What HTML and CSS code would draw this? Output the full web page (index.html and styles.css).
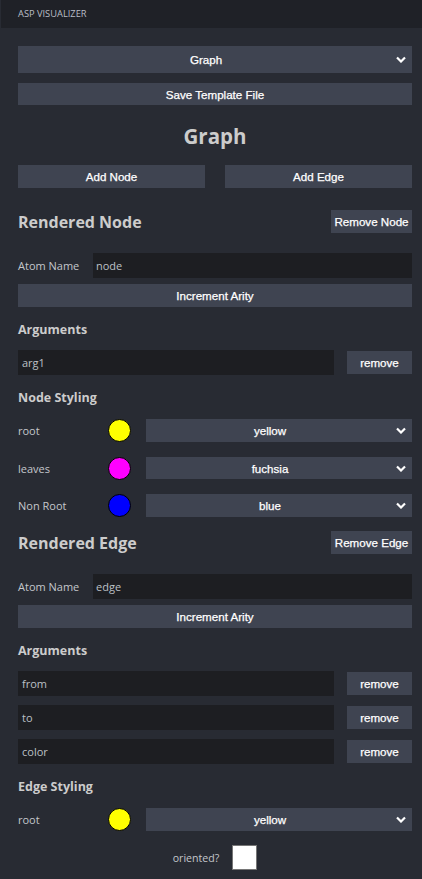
FILE: index.html
```html
<!DOCTYPE html>
<html lang="en">
<head>
<meta charset="utf-8">
<title>ASP Visualizer</title>
<link rel="stylesheet" href="styles.css">
</head>
<body>
<header class="topbar">ASP VISUALIZER</header>
<main class="panel">
  <div class="select select-main">
    <span class="select-text">Graph</span>
    <svg class="chev" width="10" height="7" viewBox="0 0 10 7"><path d="M1 1.5 L5 5.5 L9 1.5" fill="none" stroke="#fff" stroke-width="2.2"/></svg>
  </div>
  <button class="btn btn-full btn-save">Save Template File</button>
  <h1 class="title">Graph</h1>
  <div class="add-row">
    <button class="btn btn-add">Add Node</button>
    <button class="btn btn-add">Add Edge</button>
  </div>

  <section class="block block-node">
    <div class="sec-head">
      <h2 class="sec-title">Rendered Node</h2>
      <button class="btn btn-remove-sec">Remove Node</button>
    </div>
    <div class="atom-row">
      <span class="label atom-label">Atom Name</span>
      <div class="input atom-input">node</div>
    </div>
    <button class="btn btn-full btn-inc">Increment Arity</button>
    <h3 class="sub-title">Arguments</h3>
    <div class="args">
      <div class="arg-row"><div class="input arg-input">arg1</div><button class="btn btn-rm">remove</button></div>
    </div>
    <h3 class="sub-title">Node Styling</h3>
    <div class="styles">
      <div class="style-row">
        <span class="label">root</span>
        <span class="swatch sw-yellow"></span>
        <div class="select select-sm"><span class="select-text">yellow</span><svg class="chev" width="10" height="7" viewBox="0 0 10 7"><path d="M1 1.5 L5 5.5 L9 1.5" fill="none" stroke="#fff" stroke-width="2.2"/></svg></div>
      </div>
      <div class="style-row">
        <span class="label">leaves</span>
        <span class="swatch sw-fuchsia"></span>
        <div class="select select-sm"><span class="select-text">fuchsia</span><svg class="chev" width="10" height="7" viewBox="0 0 10 7"><path d="M1 1.5 L5 5.5 L9 1.5" fill="none" stroke="#fff" stroke-width="2.2"/></svg></div>
      </div>
      <div class="style-row">
        <span class="label">Non Root</span>
        <span class="swatch sw-blue"></span>
        <div class="select select-sm"><span class="select-text">blue</span><svg class="chev" width="10" height="7" viewBox="0 0 10 7"><path d="M1 1.5 L5 5.5 L9 1.5" fill="none" stroke="#fff" stroke-width="2.2"/></svg></div>
      </div>
    </div>
  </section>

  <section class="block block-edge">
    <div class="sec-head">
      <h2 class="sec-title">Rendered Edge</h2>
      <button class="btn btn-remove-sec">Remove Edge</button>
    </div>
    <div class="atom-row">
      <span class="label atom-label">Atom Name</span>
      <div class="input atom-input">edge</div>
    </div>
    <button class="btn btn-full btn-inc">Increment Arity</button>
    <h3 class="sub-title">Arguments</h3>
    <div class="args">
      <div class="arg-row"><div class="input arg-input">from</div><button class="btn btn-rm">remove</button></div>
      <div class="arg-row"><div class="input arg-input">to</div><button class="btn btn-rm">remove</button></div>
      <div class="arg-row"><div class="input arg-input">color</div><button class="btn btn-rm">remove</button></div>
    </div>
    <h3 class="sub-title">Edge Styling</h3>
    <div class="styles">
      <div class="style-row">
        <span class="label">root</span>
        <span class="swatch sw-yellow"></span>
        <div class="select select-sm"><span class="select-text">yellow</span><svg class="chev" width="10" height="7" viewBox="0 0 10 7"><path d="M1 1.5 L5 5.5 L9 1.5" fill="none" stroke="#fff" stroke-width="2.2"/></svg></div>
      </div>
    </div>
    <div class="oriented">
      <span class="label">oriented?</span>
      <span class="checkbox"></span>
    </div>
  </section>
</main>
</body>
</html>
```

FILE: styles.css
```css
* { box-sizing: border-box; }
html, body { margin: 0; padding: 0; }
body {
  background: #282b33;
  font-family: "Open Sans", "DejaVu Sans", sans-serif;
  color: #c8c8c8;
  width: 422px;
  height: 879px;
  overflow: hidden;
}
.topbar {
  height: 28px;
  margin-left: 1px;
  background: #1f2127;
  padding-left: 17px;
  font-size: 9.3px;
  line-height: 28px;
  color: #babec6;
}
.panel {
  padding: 18px 10px 0 18px;
  display: flex;
  flex-direction: column;
}
.btn {
  border: none;
  margin: 0;
  background: #3f4451;
  color: #ffffff;
  font-family: "Liberation Sans", Arial, sans-serif;
  font-size: 11.6px;
  -webkit-text-stroke: 0.25px #ffffff;
  padding: 0 3px;
  cursor: pointer;
  display: flex;
  align-items: center;
  justify-content: center;
  white-space: nowrap;
}
.select {
  background: #3f4451;
  color: #fff;
  font-family: "Liberation Sans", Arial, sans-serif;
  font-size: 11.6px;
  -webkit-text-stroke: 0.25px #ffffff;
  display: flex;
  align-items: center;
  padding-right: 6px;
}
.select-text {
  flex: 1;
  text-align: center;
  padding-right: 2px;
}
.chev { display: block; flex: none; }
.select-main { height: 27px; }
.select-sm { height: 22.5px; flex: 1; }
.btn-full { width: 100%; }
.btn-save { margin-top: 10px; height: 22px; }
.title {
  margin: 17px 0 15px;
  text-align: center;
  font-size: 20.5px;
  line-height: 28px;
  font-weight: 700;
  color: #cccccc;
}
.add-row {
  display: flex;
  gap: 20px;
}
.btn-add { flex: 1; height: 23px; }
.block { display: flex; flex-direction: column; }
.block-node { margin-top: 22px; }
.block-edge { margin-top: 14px; }
.sec-head {
  display: flex;
  align-items: center;
  justify-content: space-between;
  height: 23px;
}
.sec-title {
  margin: 0;
  font-size: 16px;
  font-weight: 700;
  color: #cccccc;
  line-height: 23px;
  position: relative;
  top: 1px;
}
.btn-remove-sec { height: 23px; width: 81px; }
.label {
  font-size: 11px;
  color: #c4c7cc;
  white-space: nowrap;
}
.atom-row {
  margin-top: 20px;
  display: flex;
  align-items: center;
  height: 25px;
}
.atom-label { width: 75px; flex: none; }
.input {
  background: #1d1e22;
  color: #bcc0c6;
  font-size: 11px;
  height: 25px;
  display: flex;
  align-items: center;
}
.atom-input { flex: 1; padding-left: 3px; }
.btn-inc { margin-top: 6px; height: 23px; }
.sub-title {
  margin: 12px 0 0;
  padding-top: 1px;
  font-size: 12.5px;
  line-height: 19px;
  font-weight: 700;
  color: #cccccc;
}
.args {
  margin-top: 11px;
  display: flex;
  flex-direction: column;
  gap: 9px;
}
.arg-row {
  display: flex;
  align-items: center;
  gap: 13px;
}
.arg-input { flex: 1; padding-left: 4px; }
.btn-rm { width: 65px; height: 23px; }
.styles {
  margin-top: 12px;
  display: flex;
  flex-direction: column;
  gap: 14.5px;
}
.style-row {
  display: flex;
  align-items: center;
  height: 23px;
}
.style-row .label { width: 90px; flex: none; }
.swatch {
  width: 23px;
  height: 23px;
  border-radius: 50%;
  border: 1px solid #000;
  flex: none;
  margin-right: 15px;
}
.sw-yellow { background: #ffff00; }
.sw-fuchsia { background: #ff00ff; }
.sw-blue { background: #0000ff; }
.oriented {
  margin-top: 14px;
  display: flex;
  justify-content: center;
  align-items: center;
  gap: 13px;
}
.oriented .label { font-size: 10.6px; }
.checkbox {
  width: 25px;
  height: 25px;
  background: #fff;
  border: 1px solid #767676;
  display: block;
}
```
